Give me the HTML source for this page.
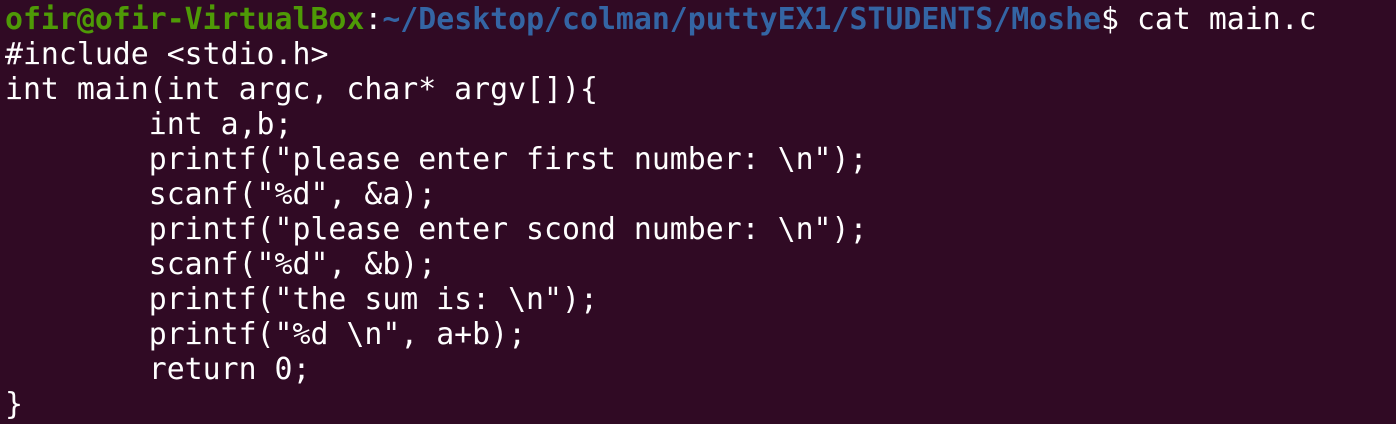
<!DOCTYPE html>
<html><head><style>
html,body{margin:0;padding:0;background:#300a24;width:1396px;height:424px;overflow:hidden}
pre{margin:0;position:absolute;left:5px;top:2px;font-family:"DejaVu Sans Mono","Liberation Mono",monospace;font-size:29.85px;line-height:35px;color:#ffffff}
.g{color:#4e9a06;font-weight:bold}.b{color:#3465a4;font-weight:bold}
</style></head><body><pre><span class="g">ofir@ofir-VirtualBox</span>:<span class="b">~/Desktop/colman/puttyEX1/STUDENTS/Moshe</span>$ cat main.c
#include &lt;stdio.h&gt;
int main(int argc, char* argv[]){
        int a,b;
        printf("please enter first number: \n");
        scanf("%d", &amp;a);
        printf("please enter scond number: \n");
        scanf("%d", &amp;b);
        printf("the sum is: \n");
        printf("%d \n", a+b);
        return 0;
}</pre></body></html>
